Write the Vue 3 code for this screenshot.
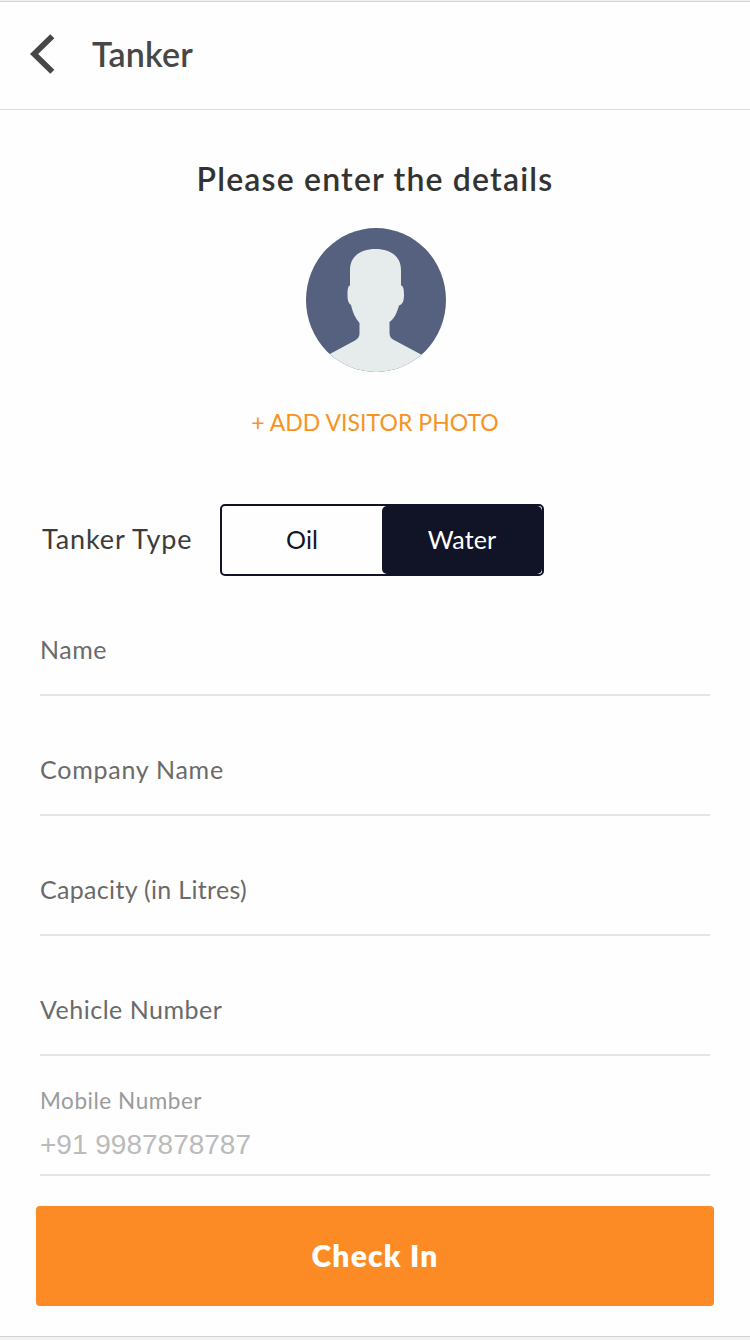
<script setup>
import { ref } from 'vue'

const tankerTypes = ['Oil', 'Water']
const selected = ref('Water')
const fields = [
  { label: 'Name', cls: 'name' },
  { label: 'Company Name', cls: 'company' },
  { label: 'Capacity (in Litres)', cls: 'capacity' },
  { label: 'Vehicle Number', cls: 'vehicle' },
]
</script>

<template>
  <div class="screen">
    <header class="bar">
      <svg class="back" width="26" height="40" viewBox="0 0 26 40">
        <path d="M22.3 2.2 4.1 20 22.3 37.8" fill="none" stroke="#474747" stroke-width="5.8" />
      </svg>
      <h1 class="title"><span>Tanker</span></h1>
    </header>

    <main class="content">
      <h2 class="heading"><span>Please enter the details</span></h2>

      <svg class="avatar" width="140" height="144" viewBox="0 0 140 144">
        <defs>
          <clipPath id="disc"><ellipse cx="70" cy="72" rx="70" ry="72" /></clipPath>
        </defs>
        <g clip-path="url(#disc)">
          <rect width="140" height="144" fill="#56617f" />
          <path
            fill="#e6ecec"
            d="M69.500 21C84 21 95 28 95 42V57.500C97.300 58 98 61 98 67C98 73 96.500 76.500 93 77.500C91 85 88 91 83.500 94V104C83.500 108 84.500 110 87 111.500L116 127V150H22V127L49 112.500C52 110.500 53.500 109 53.500 105V95C49 90 46.500 84 45 77C42.500 75 41.500 73 41.500 67C41.500 61 42 58 44 57.500V42C44 28 55 21 69.500 21Z"
          />
        </g>
      </svg>

      <button class="add-photo"><span>+ ADD VISITOR PHOTO</span></button>

      <div class="type-row">
        <span class="type-label">Tanker Type</span>
        <div class="segmented">
          <button
            v-for="t in tankerTypes"
            :key="t"
            class="segment"
            :class="{ active: t === selected }"
            @click="selected = t"
          >{{ t }}</button>
        </div>
      </div>

      <div v-for="f in fields" :key="f.label" class="field">
        <span :class="f.cls">{{ f.label }}</span>
      </div>

      <div class="field filled">
        <span class="mobile-label">Mobile Number</span>
        <span class="mobile-value">+91 9987878787</span>
      </div>

      <button class="check-in"><span>Check In</span></button>
    </main>
    <div class="bottom-edge"></div>
  </div>
</template>

<style>
body {
  background: #fff;
}
</style>

<style scoped>
.screen {
  box-sizing: border-box;
  width: 750px;
  height: 1340px;
  display: flex;
  flex-direction: column;
  background: #fefefe;
  border-top: 1px solid #f1f1f1;
  font-family: Lato, "Liberation Sans", sans-serif;
  overflow: hidden;
}
button {
  font: inherit;
  border: 0;
  padding: 0;
  background: none;
}
h1,
h2 {
  margin: 0;
}
span {
  white-space: nowrap;
}
.bar {
  box-sizing: border-box;
  height: 109px;
  display: flex;
  align-items: center;
  border-top: 1px solid #d5d5d5;
  border-bottom: 1px solid #dcdcdc;
  padding-left: 30px;
  flex: none;
}
.back {
  margin-top: -4px;
}
.title {
  margin: -3px 0 0 36px;
  font-size: 34px;
  line-height: 40px;
  font-weight: 600;
  letter-spacing: 0.15px;
  color: #474747;
}
.content {
  flex: 1;
  display: flex;
  flex-direction: column;
  padding: 0 36px;
}
.heading {
  margin-top: 49px;
  text-align: center;
  font-size: 32px;
  line-height: 40px;
  font-weight: 600;
  letter-spacing: 1.18px;
  color: #333;
}
.avatar {
  align-self: center;
  margin: 29px 0 0 2px;
}
.add-photo {
  margin-top: 35px;
  font-size: 23px;
  line-height: 30px;
  letter-spacing: 0.04px;
  color: #f7931e;
}
.type-row {
  display: flex;
  align-items: center;
  margin: 67px 0 0 6px;
  height: 72px;
}
.type-label {
  width: 178px;
  font-size: 27px;
  line-height: 36px;
  letter-spacing: 0.87px;
  color: #3c3c3c;
  margin-top: -2px;
}
.segmented {
  box-sizing: border-box;
  width: 324px;
  height: 72px;
  display: flex;
  border: 2px solid #111427;
  border-radius: 5px;
}
.segment {
  flex: 1;
  border-radius: 5px;
  padding-bottom: 2px;
  font-size: 25px;
  line-height: 66px;
  letter-spacing: 0.1px;
  color: #111427;
}
.segment.active {
  background: #111427;
  color: #fff;
}
.field {
  box-sizing: border-box;
  height: 120px;
  margin: 0 4px;
  padding-top: 57px;
  border-bottom: 2px solid #e5e5e5;
  font-size: 25px;
  line-height: 32px;
  letter-spacing: 0.5px;
  color: #6a6a6a;
}
.company {
  letter-spacing: 0.75px;
}
.capacity {
  letter-spacing: 0.32px;
}
.filled {
  display: flex;
  flex-direction: column;
  padding-top: 30px;
}
.mobile-label {
  font-size: 22.5px;
  line-height: 30px;
  letter-spacing: 0.55px;
  color: #9b9b9b;
}
.mobile-value {
  margin-top: 13px;
  font-family: "Liberation Sans", Arial, sans-serif;
  font-size: 28px;
  line-height: 32px;
  letter-spacing: 0;
  color: #bbb;
}
.check-in {
  margin-top: 30px;
  height: 100px;
  border-radius: 4px;
  padding-bottom: 3px;
  background: #fd8b25;
  color: #fff;
  font-size: 30px;
  line-height: 36px;
  font-weight: 800;
  letter-spacing: 1.2px;
}
.bottom-edge {
  box-sizing: border-box;
  height: 4px;
  background: #f1f1f1;
  border-top: 1px solid #d2d2d2;
}
</style>
